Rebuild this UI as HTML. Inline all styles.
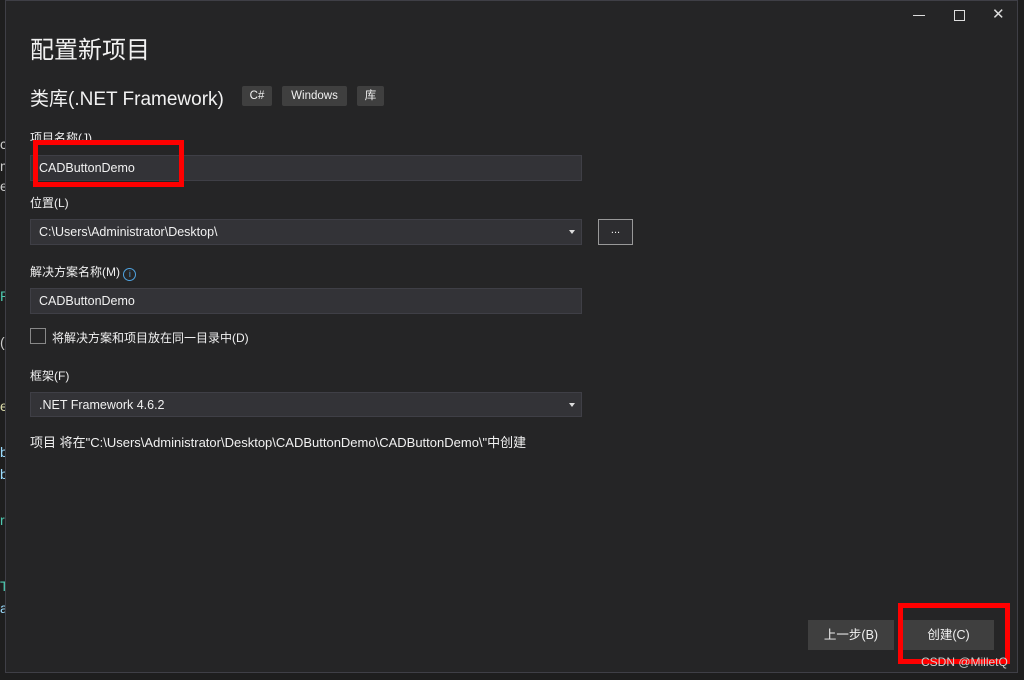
<!DOCTYPE html>
<html><head><meta charset="utf-8"><style>
body{margin:0;width:1024px;height:680px;background:#1e1e1e;overflow:hidden;position:relative;font-family:"Liberation Sans","Noto Sans CJK SC",sans-serif;color:#f1f1f1}
.a{position:absolute}
.dlg{left:5px;top:0;width:1013px;height:673px;background:#252526;border:1px solid #3f3f46;box-sizing:border-box}
.lbl{font-size:12px;color:#f1f1f1}
.inp{background:#333337;border:1px solid #3f3f46;box-sizing:border-box;font-size:12.5px;padding-left:8px;line-height:24px}
.tag{background:#3f3f3f;font-size:11.5px;line-height:20px;text-align:center;border-radius:2px}
.btn{background:#3f3f3f;font-size:12.5px;text-align:center;line-height:30px}
.red{border:5px solid #f00;box-sizing:border-box}
.ar{position:absolute;right:6px;top:10px;width:0;height:0;border-left:3.5px solid transparent;border-right:3.5px solid transparent;border-top:4px solid #ddd}
.le{left:0;font-size:14px;width:6px;overflow:hidden}
</style></head><body>
<div class="a le" style="top:136px;color:#ccc">c</div>
<div class="a le" style="top:158px;color:#ccc">m</div>
<div class="a le" style="top:178px;color:#ccc">e</div>
<div class="a le" style="top:288px;color:#4ec9b0">R</div>
<div class="a le" style="top:334px;color:#ccc">(</div>
<div class="a le" style="top:398px;color:#dcdcaa">e</div>
<div class="a le" style="top:444px;color:#9cdcfe">b</div>
<div class="a le" style="top:466px;color:#9cdcfe">b</div>
<div class="a le" style="top:512px;color:#4ec9b0">r</div>
<div class="a le" style="top:578px;color:#4ec9b0">T</div>
<div class="a le" style="top:600px;color:#9cdcfe">a</div>
<div class="a dlg"></div>
<div class="a" style="left:913px;top:15px;width:12px;height:1px;background:#ddd"></div>
<div class="a" style="left:954px;top:10px;width:9px;height:9px;border:1px solid #ddd"></div>
<div class="a" style="left:992px;top:5px;font-size:15px;color:#ddd">&#10005;</div>
<div class="a" style="left:30px;top:30px;font-size:24px">配置新项目</div>
<div class="a" style="left:30px;top:84px;font-size:19px">类库(.NET Framework)</div>
<div class="a tag" style="left:242px;top:86px;width:30px">C#</div>
<div class="a tag" style="left:282px;top:86px;width:65px">Windows</div>
<div class="a tag" style="left:357px;top:86px;width:27px">库</div>
<div class="a lbl" style="left:30px;top:129px">项目名称(J)</div>
<div class="a inp" style="left:30px;top:155px;width:552px;height:26px">CADButtonDemo</div>
<div class="a lbl" style="left:30px;top:194px">位置(L)</div>
<div class="a inp" style="left:30px;top:219px;width:552px;height:26px">C:\Users\Administrator\Desktop\<div class="ar"></div></div>
<div class="a" style="left:598px;top:219px;width:35px;height:26px;border:1px solid #999;box-sizing:border-box;background:#2d2d30;text-align:center;font-size:11px;line-height:20px">...</div>
<div class="a lbl" style="left:30px;top:263px">解决方案名称(M) <span style="display:inline-block;width:11px;height:11px;border:1px solid #4fa3e0;border-radius:50%;font-size:9px;line-height:11px;text-align:center;color:#4fa3e0;vertical-align:-1px">i</span></div>
<div class="a inp" style="left:30px;top:288px;width:552px;height:26px">CADButtonDemo</div>
<div class="a" style="left:30px;top:328px;width:16px;height:16px;border:1px solid #888;box-sizing:border-box"></div>
<div class="a lbl" style="left:52px;top:329px">将解决方案和项目放在同一目录中(D)</div>
<div class="a lbl" style="left:30px;top:367px">框架(F)</div>
<div class="a inp" style="left:30px;top:392px;width:552px;height:25px">.NET Framework 4.6.2<div class="ar"></div></div>
<div class="a lbl" style="left:30px;top:432px;font-size:13px">项目 将在"C:\Users\Administrator\Desktop\CADButtonDemo\CADButtonDemo\"中创建</div>
<div class="a btn" style="left:808px;top:620px;width:86px;height:30px">上一步(B)</div>
<div class="a btn" style="left:903px;top:620px;width:91px;height:30px">创建(C)</div>
<div class="a red" style="left:33px;top:140px;width:151px;height:47px"></div>
<div class="a red" style="left:898px;top:603px;width:112px;height:61px"></div>
<div class="a" style="left:921px;top:655px;font-size:12px;color:#ccc">CSDN @MilletQ</div>
</body></html>
